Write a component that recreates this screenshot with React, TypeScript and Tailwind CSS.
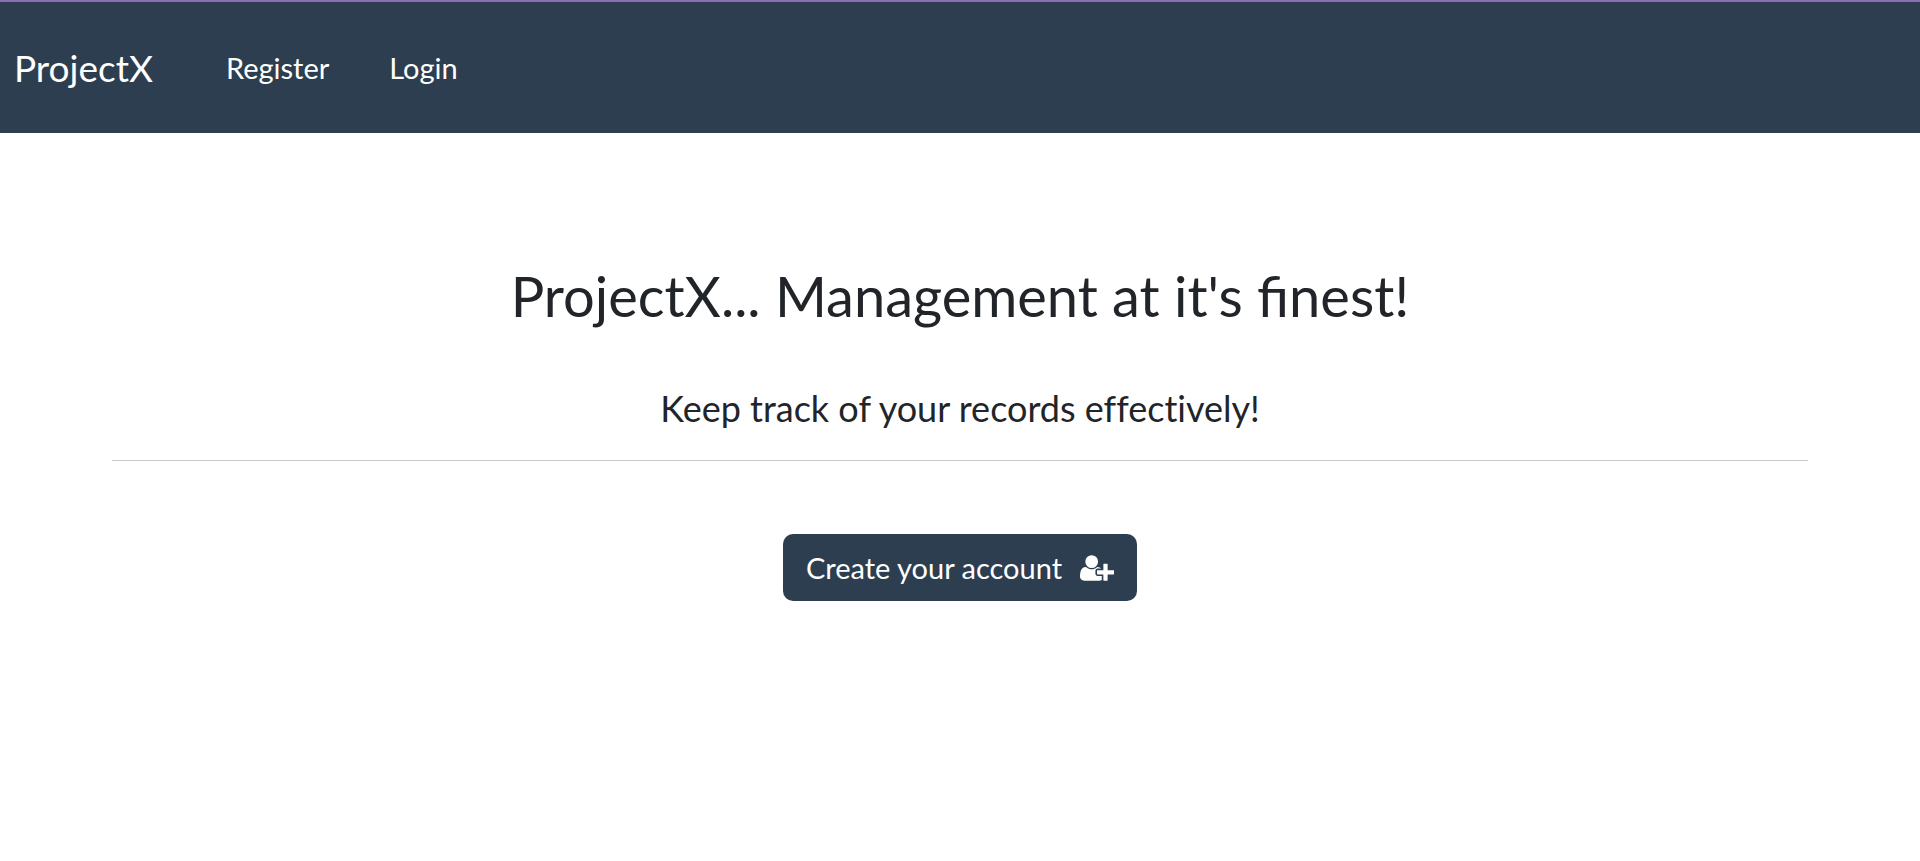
function UserPlusIcon() {
  return (
    <svg viewBox="0 0 2048 1792" className="h-[30px] w-[34px] fill-current" aria-hidden="true">
      <path d="M704 896q-159 0-271.5-112.5t-112.5-271.5 112.5-271.5 271.5-112.5 271.5 112.5 112.5 271.5-112.5 271.5-271.5 112.5zm960 128h352q13 0 22.5 9.5t9.5 22.5v192q0 13-9.5 22.5t-22.5 9.5h-352v352q0 13-9.5 22.5t-22.5 9.5h-192q-13 0-22.5-9.5t-9.5-22.5v-352h-352q-13 0-22.5-9.5t-9.5-22.5v-192q0-13 9.5-22.5t22.5-9.5h352v-352q0-13 9.5-22.5t22.5-9.5h192q13 0 22.5 9.5t9.5 22.5v352zm-736 224q0 52 38 90t90 38h256v238q-68 50-171 50h-874q-121 0-194-69t-73-190q0-53 3.5-103.5t14-109 26.5-108.5 43-97.5 62-81 85.5-53.5 111.5-20q19 0 39 17 79 61 154.5 91.5t164.5 30.5 164.5-30.5 154.5-91.5q20-17 39-17 132 0 217 96h-223q-52 0-90 38t-38 90v192z" />
    </svg>
  );
}

export default function App() {
  return (
    <div className="min-h-screen bg-white font-['Lato',sans-serif] text-[#212529]">
      <header className="border-t-2 border-[#8e6bb5] bg-[#2c3e50] text-white">
        <nav className="flex items-center px-3.5 py-9">
          <a href="#" className="mr-[73px] text-[37px] leading-[59px]">
            ProjectX
          </a>
          <div className="flex items-center gap-[60px] text-[29px] leading-[59px]">
            <a href="#register">Register</a>
            <a href="#login">Login</a>
          </div>
        </nav>
      </header>
      <main className="px-28 pt-32 text-center">
        <h1 className="text-[56px] leading-[70px]">ProjectX... Management at it's finest!</h1>
        <p className="mt-[50px] text-4xl leading-[54px] [font-variant-ligatures:none]">
          Keep track of your records effectively!
        </p>
        <hr className="mt-[25px] mb-[73px] border-t border-[#c8c8c8]" />
        <a
          href="#register"
          className="inline-flex items-center gap-[18px] rounded-[10px] bg-[#2c3e50] px-[23px] py-3 text-[29px] leading-[43px] text-white"
        >
          Create your account
          <UserPlusIcon />
        </a>
      </main>
    </div>
  );
}
